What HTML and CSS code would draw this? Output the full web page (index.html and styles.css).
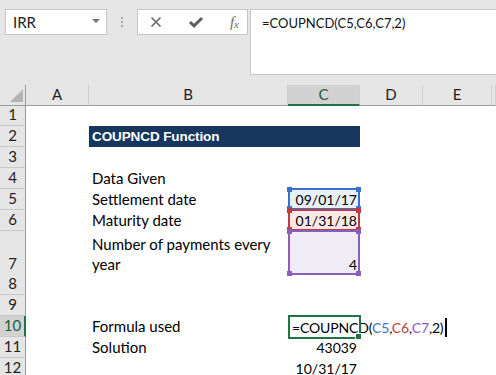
FILE: index.html
```html
<!DOCTYPE html>
<html>
<head>
<meta charset="utf-8">
<link rel="stylesheet" href="styles.css">
</head>
<body>
<div class="topbar">
  <div class="namebox"><span class="nb-text">IRR</span><span class="nb-arrow"></span></div>
  <div class="sep"><span></span><span></span><span></span></div>
  <div class="btnbox">
    <svg class="ic" width="14" height="14" viewBox="0 0 14 14"><path d="M2.5 2.5 L11.5 11.5 M11.5 2.5 L2.5 11.5" stroke="#6d6d6d" stroke-width="1.7" fill="none"/></svg>
    <svg class="ic" width="16" height="14" viewBox="0 0 16 14"><path d="M2 7 L6 10.8 L14 3" stroke="#5f5f5f" stroke-width="3" fill="none"/></svg>
    <span class="fx"><i>f</i><sub>x</sub></span>
  </div>
  <div class="fbox">=COUPNCD(C5,C6,C7,2)</div>
</div>

<div class="sheet">
  <div class="row hdr">
    <div class="corner"><span class="tri"></span></div>
    <div class="ch">A</div>
    <div class="ch">B</div>
    <div class="ch sel">C</div>
    <div class="ch">D</div>
    <div class="ch">E</div>
    <div class="ch"></div>
  </div>
  <div class="row"><div class="rh">1</div></div>
  <div class="row"><div class="rh">2</div><div class="cell"></div><div class="title">COUPNCD Function</div></div>
  <div class="row"><div class="rh">3</div></div>
  <div class="row"><div class="rh">4</div><div class="cell"></div><div class="cell">Data Given</div></div>
  <div class="row"><div class="rh">5</div><div class="cell"></div><div class="cell">Settlement date</div><div class="cell num hl blue">09/01/17<span class="frame"><i class="k tl"></i><i class="k tr"></i><i class="k bl"></i><i class="k br"></i></span></div></div>
  <div class="row"><div class="rh">6</div><div class="cell"></div><div class="cell">Maturity date</div><div class="cell num hl red">01/31/18<span class="frame"><i class="k tl"></i><i class="k tr"></i><i class="k bl"></i><i class="k br"></i></span></div></div>
  <div class="row tall"><div class="rh">7</div><div class="cell"></div><div class="cell wrap">Number of payments every<br>year</div><div class="cell num hl purple">4<span class="frame"><i class="k tl"></i><i class="k tr"></i><i class="k bl"></i><i class="k br"></i></span></div></div>
  <div class="row"><div class="rh">8</div></div>
  <div class="row"><div class="rh">9</div></div>
  <div class="row"><div class="rh sel">10</div><div class="cell"></div><div class="cell">Formula used</div><div class="edit">=COUPNCD(<span class="cb">C5</span>,<span class="cr">C6</span>,<span class="cp">C7</span>,2)<span class="caret"></span><span class="gframe"><i class="fh"></i></span></div></div>
  <div class="row"><div class="rh">11</div><div class="cell"></div><div class="cell">Solution</div><div class="cell num">43039</div></div>
  <div class="row"><div class="rh">12</div><div class="cell"></div><div class="cell"></div><div class="cell num">10/31/17</div></div>
</div>
</body>
</html>
```

FILE: styles.css
```css
* { box-sizing: border-box; }
html, body { margin: 0; padding: 0; }
body {
  width: 496px; height: 375px; overflow: hidden; background: #fff;
  font-family: "Lato", "Liberation Sans", sans-serif; color: #000;
}
.topbar {
  height: 85px; background: #e6e6e6; display: flex; align-items: flex-start;
  padding-top: 9px; padding-left: 5px;
}
.namebox {
  width: 102px; height: 26px; background: #fff; border: 1px solid #c6c6c6;
  display: flex; align-items: center; justify-content: space-between; padding: 0 6px 0 7px;
  font-size: 15px; color: #222;
}
.nb-arrow {
  width: 0; height: 0; border-left: 4px solid transparent; border-right: 4px solid transparent;
  border-top: 4px solid #777; margin-top: -2px;
}
.sep { width: 30px; height: 26px; display: flex; flex-direction: column; align-items: center; justify-content: center; gap: 2px; }
.sep span { width: 2px; height: 2px; background: #a8a8a8; }
.btnbox {
  width: 111px; height: 26px; background: #fff; border: 1px solid #c6c6c6;
  display: flex; align-items: center; justify-content: space-between; padding: 0 8px 0 11px;
}
.ic { display: block; }
.fx { font-family: "Liberation Serif", serif; color: #6d6d6d; font-size: 15px; line-height: 1; }
.fx i { font-style: italic; }
.fx sub { font-size: 11px; font-style: italic; vertical-align: -1px; }
.fbox {
  margin-left: 2px; flex: 1; height: 66px; background: #fff; border: 1px solid #c6c6c6; border-right: 0;
  padding: 5px 0 0 11px; font-size: 13px; color: #111; white-space: nowrap;
}
.row {
  display: grid; grid-template-columns: 26px 63px 199px 72px 63px 69px 4px; height: 21px;
}
.row.tall { height: 43px; }
.hdr { height: 20px; background: #e6e6e6; }
.corner { border-right: 1px solid #9b9b9b; border-bottom: 1px solid #9b9b9b; position: relative; }
.tri {
  position: absolute; right: 2px; bottom: 3px; width: 0; height: 0;
  border-left: 13px solid transparent; border-bottom: 13px solid #b4b4b4;
}
.ch {
  border-bottom: 1px solid #9b9b9b; border-right: 1px solid #d0d0d0;
  text-align: center; font-size: 15px; line-height: 19px; color: #222;
}
.ch.sel { background: #d2d2d2; border-bottom: 2px solid #217346; color: #1d5e3c; }
.rh {
  background: #e6e6e6; border-right: 1px solid #9b9b9b; border-bottom: 1px solid #c8c8c8;
  text-align: center; font-size: 15px; color: #222; display: flex; align-items: flex-end; justify-content: center;
  padding-bottom: 1px; line-height: 19px;
}
.rh.sel { background: #d2d2d2; border-right: 2px solid #217346; color: #1d5e3c; padding-left: 1px; }
.cell {
  font-size: 15px; line-height: 19px; padding: 0 3px; display: flex; align-items: flex-end;
  white-space: nowrap; position: relative; padding-bottom: 1px;
}
.cell.wrap { display: block; line-height: 20px; padding-top: 3px; }
.cell.num { justify-content: flex-end; font-size: 14px; }
.title {
  grid-column: 3 / 5; background: #17375e; color: #fff; font-weight: 700; font-size: 13.5px;
  font-family: "Liberation Sans", sans-serif; letter-spacing: -0.1px;
  line-height: 21px; padding-left: 3px;
}
.hl.blue { background: #e9f0fa; }
.hl.red { background: #fbe9e9; }
.hl.purple { background: #f0ecf6; }
.frame { position: absolute; left: 0; top: -1px; right: 0; bottom: 0; border: 2px solid; pointer-events: none; }
.blue .frame { border-color: #3b72c9; color: #3b72c9; }
.red .frame { border-color: #c23b3e; color: #c23b3e; }
.purple .frame { border-color: #8a5ebd; color: #8a5ebd; }
.k { position: absolute; width: 5px; height: 5px; background: currentColor; }
.k.tl { left: -3px; top: -3px; }
.k.tr { right: -3px; top: -3px; }
.k.bl { left: -3px; bottom: -3px; }
.k.br { right: -3px; bottom: -3px; }
.edit {
  position: relative; z-index: 2; white-space: nowrap; padding-left: 4px; padding-top: 2px;
  font-size: 14px; line-height: 19px; letter-spacing: -0.15px;
}
.cb { color: #3b72c9; }
.cr { color: #c23b3e; }
.cp { color: #8a5ebd; }
.caret { display: inline-block; width: 2px; height: 19px; background: #000; margin-left: 2px; vertical-align: -4px; }
.gframe { position: absolute; left: 0; top: -1px; right: -1px; bottom: -2px; border: 2px solid #217346; }
.fh { position: absolute; right: -3px; bottom: -3px; width: 5px; height: 5px; background: #217346; border: 1px solid #fff; box-sizing: content-box; }
```
